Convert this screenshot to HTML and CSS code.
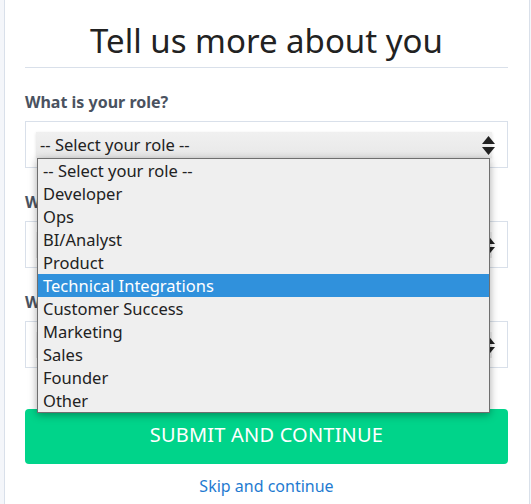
FILE: index.html
```html
<!DOCTYPE html>
<html>
<head>
<meta charset="utf-8">
<link rel="stylesheet" href="styles.css">
</head>
<body>
<div class="card">
  <h1 class="title">Tell us more about you</h1>
  <form class="form">
    <div class="field">
      <div class="label">What is your role?</div>
      <div class="box">
        <div class="select active">
          <span>-- Select your role --</span>
          <svg class="arrows" width="13" height="19" viewBox="0 0 13 19"><path d="M6.5 0 L13 8 H0 Z M0 11 H13 L6.5 19 Z" fill="#222"/></svg>
        </div>
        <ul class="dropdown">
          <li>-- Select your role --</li>
          <li>Developer</li>
          <li>Ops</li>
          <li>BI/Analyst</li>
          <li>Product</li>
          <li class="hl">Technical Integrations</li>
          <li>Customer Success</li>
          <li>Marketing</li>
          <li>Sales</li>
          <li>Founder</li>
          <li>Other</li>
        </ul>
      </div>
    </div>
    <div class="field">
      <div class="label">What is your team size?</div>
      <div class="box">
        <div class="select">
          <span>-- Select team size --</span>
          <svg class="arrows" width="13" height="19" viewBox="0 0 13 19"><path d="M6.5 0 L13 8 H0 Z M0 11 H13 L6.5 19 Z" fill="#222"/></svg>
        </div>
      </div>
    </div>
    <div class="field">
      <div class="label">Where did you hear about us?</div>
      <div class="box">
        <div class="select">
          <span>-- Select an option --</span>
          <svg class="arrows" width="13" height="19" viewBox="0 0 13 19"><path d="M6.5 0 L13 8 H0 Z M0 11 H13 L6.5 19 Z" fill="#222"/></svg>
        </div>
      </div>
    </div>
    <button type="button" class="submit">SUBMIT AND CONTINUE</button>
    <a class="skip" href="#">Skip and continue</a>
  </form>
</div>
</body>
</html>
```

FILE: styles.css
```css
html, body {
  margin: 0;
  padding: 0;
  height: 100%;
}
body {
  background: #f4f6fa;
  font-family: "Noto Sans", "Open Sans", sans-serif;
  color: #222;
}
.card {
  box-sizing: border-box;
  margin-left: 4px;
  width: 526px;
  min-height: 100%;
  background: #fff;
  border-left: 1px solid #d9e0ea;
  border-right: 1px solid #d9e0ea;
  padding: 0 21px 0 20px;
}
.title {
  margin: 0;
  padding-top: 18px;
  height: 49px;
  box-sizing: content-box;
  font-size: 33px;
  line-height: 46px;
  font-weight: 400;
  text-align: center;
  color: #222;
  border-bottom: 1px solid #d9e0ea;
}
.form {
  display: flex;
  flex-direction: column;
}
.field {
  display: flex;
  flex-direction: column;
}
.label {
  margin-top: 20px;
  height: 33px;
  line-height: 28px;
  font-size: 16px;
  font-weight: 700;
  color: #4a5260;
}
.box {
  position: relative;
  border: 1px solid #d9e0ea;
  padding: 10px 10px 0 10px;
  box-sizing: border-box;
  height: 47px;
}
.select {
  position: relative;
  height: 26px;
  display: flex;
  align-items: center;
  padding: 0 4px;
  font-size: 16.5px;
  color: #222;
  background: linear-gradient(#f0f0f0, #e8e8e8);
  margin-right: 5px;
}
.select.active {
  box-shadow: 0 1px 3px rgba(0,0,0,0.12);
}
.select span {
  line-height: 26px;
}
.arrows {
  position: absolute;
  right: -3px;
  top: 4px;
  display: block;
}
.dropdown {
  position: absolute;
  z-index: 5;
  left: 11px;
  top: 36px;
  width: 453px;
  box-sizing: border-box;
  margin: 0;
  padding: 0;
  list-style: none;
  background: #efefef;
  border: 1px solid #6f6f6f;
  box-shadow: 0 2px 8px rgba(0,0,0,0.35);
}
.dropdown li {
  height: 23px;
  line-height: 23px;
  padding-left: 5px;
  font-size: 16.5px;
  color: #222;
  white-space: nowrap;
}
.dropdown li.hl {
  background: #3091dc;
  color: #fff;
}
.submit {
  margin-top: 41px;
  height: 55px;
  padding: 0 0 4px 0;
  border: none;
  border-radius: 4px;
  background: #00d48a;
  color: #fff;
  font-family: inherit;
  font-size: 20px;
  letter-spacing: 0.2px;
  cursor: pointer;
}
.skip {
  align-self: center;
  margin-top: 10px;
  font-size: 16px;
  line-height: 24px;
  color: #1f7bd1;
  text-decoration: none;
}
```
